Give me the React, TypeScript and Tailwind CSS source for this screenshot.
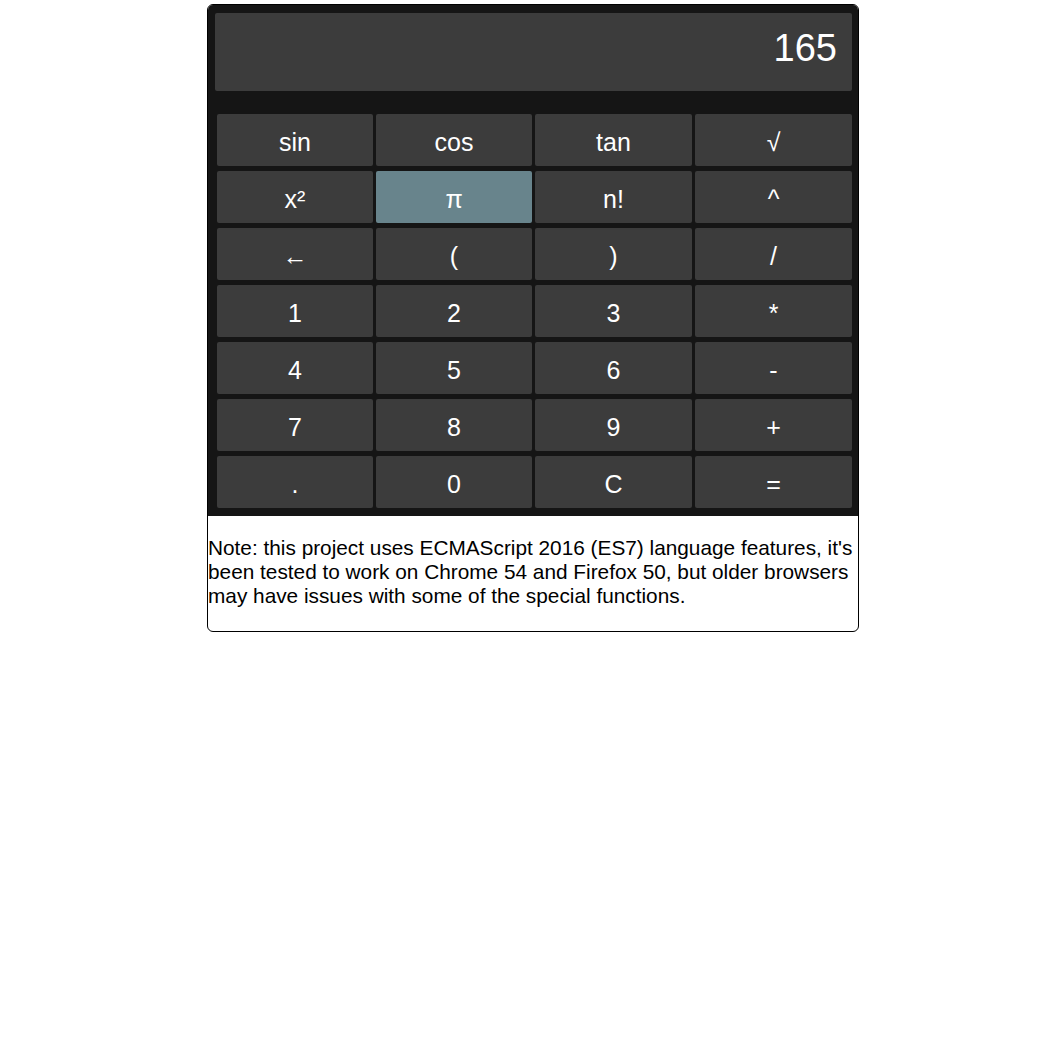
import React from "react";

const keys: string[] = [
  "sin", "cos", "tan", "√",
  "x²", "π", "n!", "^",
  "←", "(", ")", "/",
  "1", "2", "3", "*",
  "4", "5", "6", "-",
  "7", "8", "9", "+",
  ".", "0", "C", "=",
];

export default function App() {
  return (
    <div className="min-h-[1062px] bg-white" style={{ fontFamily: '"Liberation Sans", Arial, sans-serif' }}>
      <div className="ml-[207px] pt-[4px] w-[652px]">
        <div className="border border-black rounded-[6px] overflow-hidden">
          <div className="bg-[#151515] pt-[8px] pl-[7px] pr-[6px] pb-[8px]">
            <div className="h-[78px] bg-[#3c3c3c] rounded-[2px] flex items-start justify-end pr-[15px] pt-[15px]">
              <span className="text-white text-[38px] leading-[40px]">165</span>
            </div>
            <div className="mt-[23px] ml-[2px] grid grid-cols-[156px_156px_157px_157px] gap-x-[3px] gap-y-[5px]">
              {keys.map((k) => (
                <div
                  key={k}
                  className={
                    k === "π"
                      ? "h-[52px] rounded-[2px] bg-[#68848c] text-white text-[25px] leading-[28px] pt-[14px] flex items-start justify-center"
                      : "h-[52px] rounded-[2px] bg-[#3c3c3c] text-white text-[25px] leading-[28px] pt-[14px] flex items-start justify-center"
                  }
                >
                  {k}
                </div>
              ))}
            </div>
          </div>
          <p className="text-[20.8px] leading-[24px] text-black mt-[20px] mb-[23px]">
            Note: this project uses ECMAScript 2016 (ES7) language features, it's been tested to work on Chrome 54 and Firefox 50, but older browsers may have issues with some of the special functions.
          </p>
        </div>
      </div>
    </div>
  );
}
